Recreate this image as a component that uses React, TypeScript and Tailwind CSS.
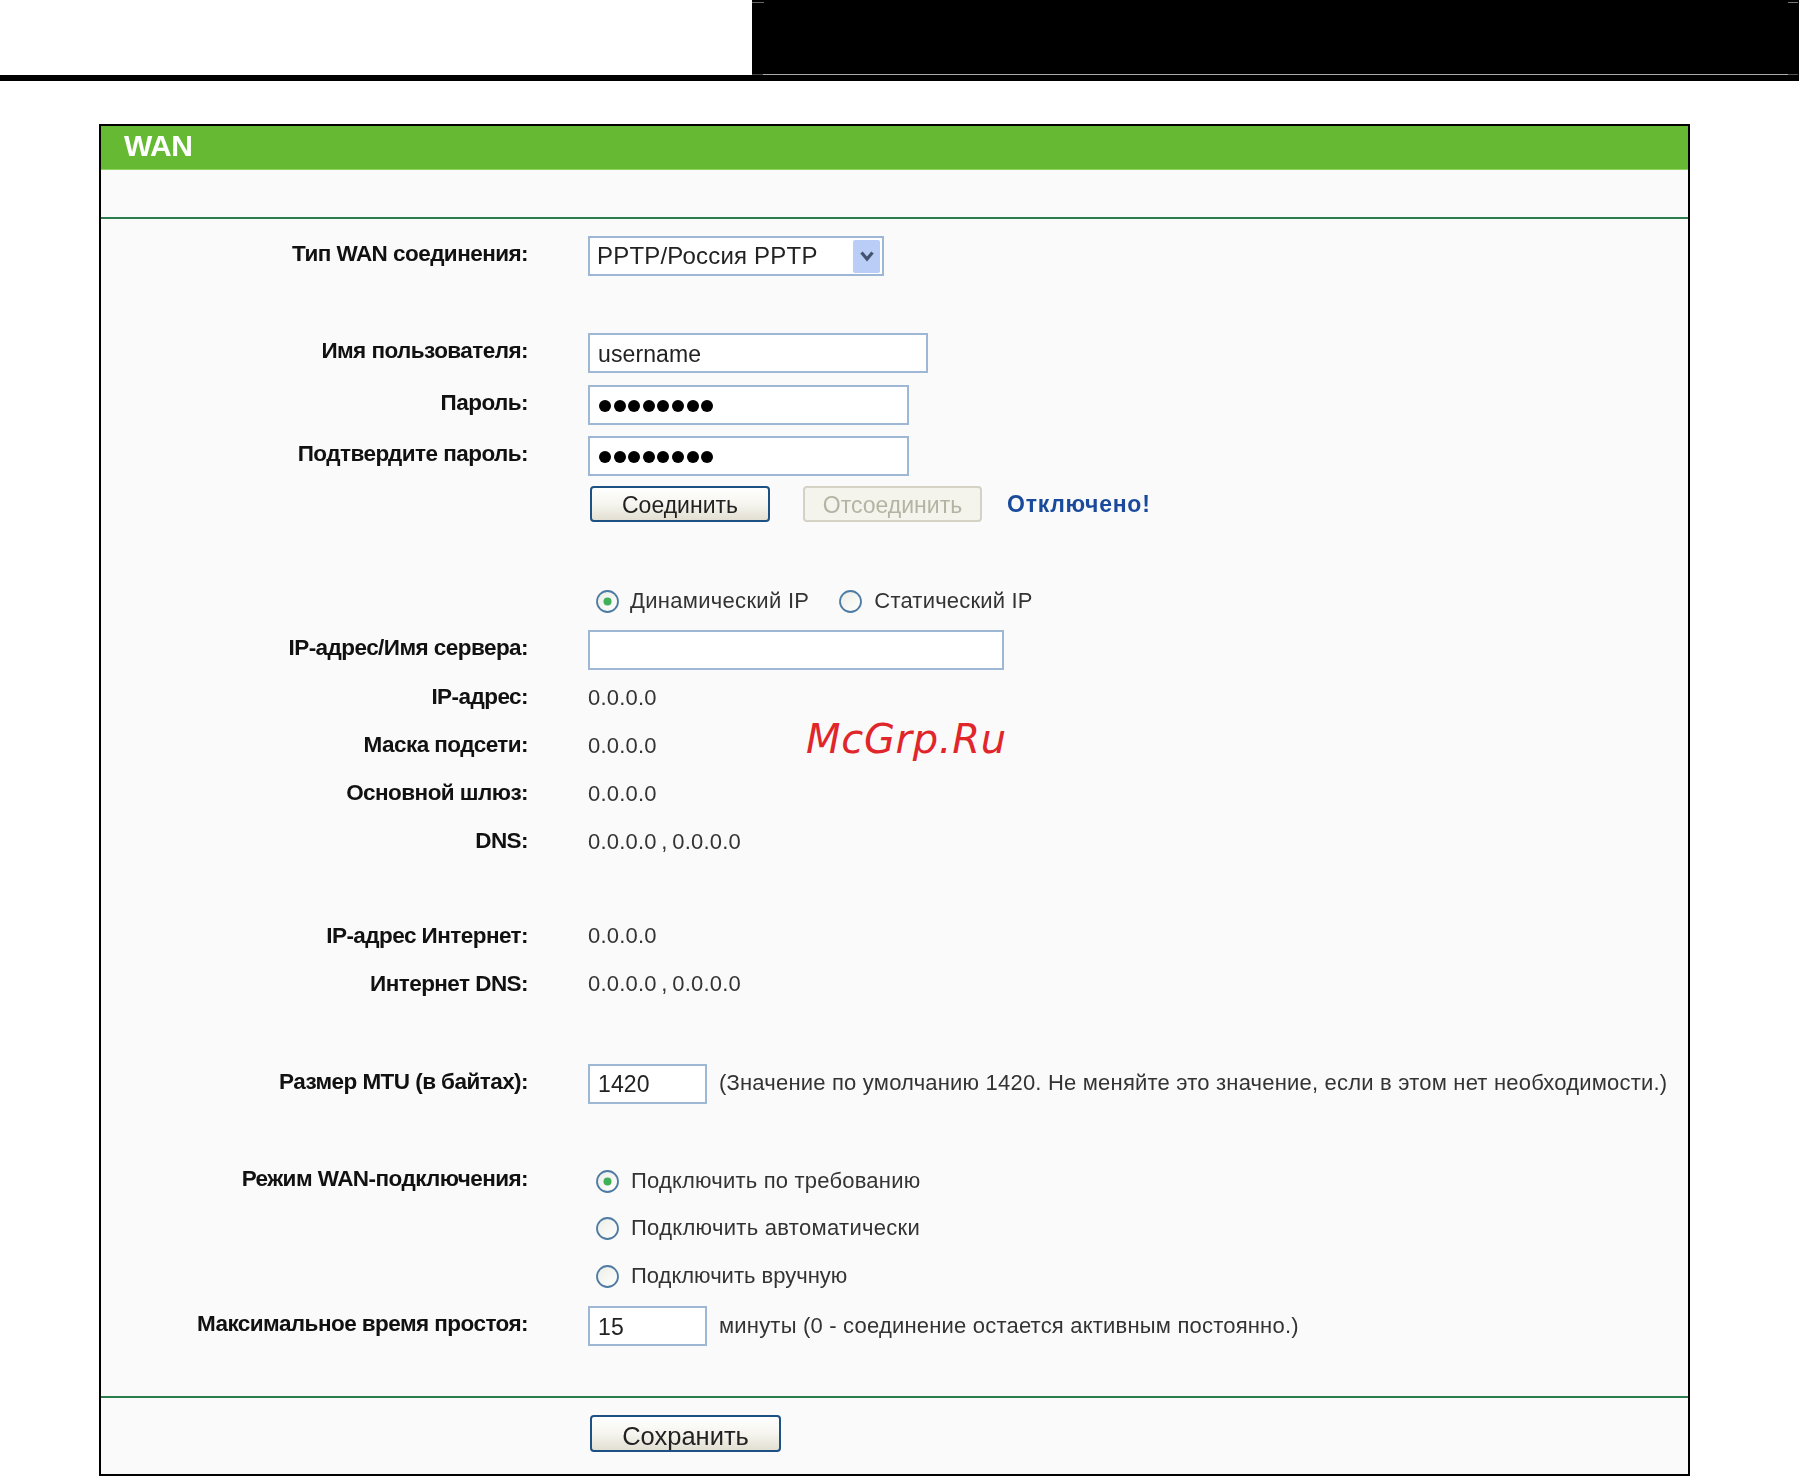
import type { ReactNode } from 'react';

const sans = 'font-["Liberation_Sans",Arial,sans-serif]';
const fieldBorder = 'border-2 border-[#9db7d4] bg-white';

function Row({ label, height, className = '', labelClass = 'pb-[4px]', children }: { label?: string; height: number; className?: string; labelClass?: string; children?: ReactNode }) {
  return (
    <div className={`flex items-center blur-[0.35px] ${className}`} style={{ height }}>
      <div className={`w-[427px] shrink-0 text-right text-[22.5px] font-bold tracking-[-0.55px] text-[#111] ${labelClass}`}>{label}</div>
      <div className="ml-[60px] flex items-center text-[22px] tracking-[0.2px] text-[#333]">{children}</div>
    </div>
  );
}

function Val({ children, className = '' }: { children: ReactNode; className?: string }) {
  return <span className={`whitespace-nowrap pb-[2px] ${className}`}>{children}</span>;
}

function Field({ value, width }: { value: string; width: number }) {
  return (
    <input
      readOnly
      type="text"
      value={value}
      style={{ width }}
      className={`h-[40px] ${fieldBorder} pl-[8px] pt-[2px] text-[23px] tracking-[0.1px] text-[#222] outline-none`}
    />
  );
}

function PasswordDots({ width }: { width: number }) {
  return (
    <div style={{ width }} className={`flex h-[40px] items-center gap-[2.6px] ${fieldBorder} pl-[9px] pt-[2px]`}>
      {[0, 1, 2, 3, 4, 5, 6, 7].map((i) => (
        <span key={i} className="h-[12px] w-[12px] rounded-full bg-black" />
      ))}
    </div>
  );
}

function Radio({ on = false }: { on?: boolean }) {
  return (
    <svg width="25" height="25" viewBox="0 0 25 25" className="shrink-0">
      <defs>
        <linearGradient id={on ? 'radio-on' : 'radio-off'} x1="0" y1="0" x2="1" y2="1">
          <stop offset="0" stopColor="#ecece6" />
          <stop offset="1" stopColor="#ffffff" />
        </linearGradient>
      </defs>
      <circle cx="12.5" cy="12.5" r="10.5" fill={`url(#${on ? 'radio-on' : 'radio-off'})`} stroke="#4d7ba3" strokeWidth="1.8" />
      {on && <circle cx="12.5" cy="12.5" r="4" fill="#3fb05a" />}
    </svg>
  );
}

function Btn({ children, width, height = 36, disabled = false }: { children: ReactNode; width: number; height?: number; disabled?: boolean }) {
  return (
    <button
      disabled={disabled}
      style={{ width, height }}
      className={
        disabled
          ? 'rounded-[4px] border-2 border-[#d3d2c4] bg-[#f4f4ec] text-[23px] text-[#b5b4a4]'
          : 'rounded-[4px] border-2 border-[#1d5083] bg-gradient-to-b from-white via-[#f6f5ef] to-[#e2dfd2] text-[23px] text-[#222]'
      }
    >
      {children}
    </button>
  );
}

export default function App() {
  return (
    <div className={`relative h-[1476px] w-full overflow-hidden bg-white ${sans}`}>
      {/* top strip */}
      <div className="flex h-[75px]">
        <div className="w-[752px]" />
        <div className="flex flex-1 flex-col justify-between bg-black pt-[2px]">
          <div className="flex justify-between">
            <span className="h-[1px] w-[12px] bg-[#666]" />
            <span className="mr-[1px] h-[1px] w-[10px] bg-[#777]" />
          </div>
          <div className="flex pb-[0.5px]">
            <span className="h-[1px] w-[11px] bg-[#444]" />
            <span className="h-[1px] flex-1 bg-[#aaa]" />
            <span className="mr-[1px] h-[1px] w-[10px] bg-[#555]" />
          </div>
        </div>
      </div>
      <div className="h-[6px] bg-black" />

      {/* panel */}
      <div className="ml-[99px] mt-[43px] h-[1352px] w-[1591px] border-2 border-black bg-[#fafafa]">
        <div className="flex h-[44px] items-center border-b border-[#8fd45f] bg-[#66b933] pb-[4px] pl-[23px] text-[30px] font-bold tracking-[-0.6px] text-white">
          <span className="blur-[0.35px]">WAN</span>
        </div>
        <div className="mt-[47px] h-[2px] bg-[#2c7d4d]" />

        <Row label="Тип WAN соединения:" height={40} className="mt-[17px]">
          <div className={`flex h-[40px] w-[296px] items-center justify-between ${fieldBorder} pl-[7px] pr-[2px] text-[24px] text-[#222]`}>
            <span>PPTP/Россия PPTP</span>
            <span className="flex h-[33px] w-[27px] items-center justify-center rounded-[2px] bg-[#b9cdf6]">
              <svg width="16" height="14" viewBox="0 0 16 14">
                <path d="M2.5 3.5 L8 10 L13.5 3.5" fill="none" stroke="#45536e" strokeWidth="3.2" />
              </svg>
            </span>
          </div>
        </Row>

        <Row label="Имя пользователя:" height={40} className="mt-[57px]">
          <Field value="username" width={340} />
        </Row>
        <Row label="Пароль:" height={40} className="mt-[12px]">
          <PasswordDots width={321} />
        </Row>
        <Row label="Подтвердите пароль:" height={40} className="mt-[11px]">
          <PasswordDots width={321} />
        </Row>
        <Row height={36} className="mt-[10px]">
          <div className="ml-[2px] flex items-center tracking-normal">
            <Btn width={180}>Соединить</Btn>
            <span className="ml-[33px]"><Btn width={179} disabled>Отсоединить</Btn></span>
            <span className="ml-[25px] text-[23px] font-bold tracking-[0.75px] text-[#1a4a9c]">Отключено!</span>
          </div>
        </Row>

        <Row height={40} className="mt-[59px]">
          <div className="ml-[7px] flex items-center">
            <Radio on />
            <Val className="ml-[10px] tracking-[0.3px]">Динамический IP</Val>
            <span className="ml-[29px]"><Radio /></span>
            <Val className="ml-[11px]">Статический IP</Val>
          </div>
        </Row>
        <Row label="IP-адрес/Имя сервера:" height={40} className="mt-[9px]">
          <Field value="" width={416} />
        </Row>
        <Row label="IP-адрес:" height={48} labelClass="pb-[2px]" className="mt-[4px]"><Val>0.0.0.0</Val></Row>
        <Row label="Маска подсети:" height={48} labelClass="pb-[2px]"><Val>0.0.0.0</Val></Row>
        <Row label="Основной шлюз:" height={48} labelClass="pb-[2px]"><Val>0.0.0.0</Val></Row>
        <Row label="DNS:" height={48} labelClass="pb-[2px]"><Val className="[word-spacing:-1.7px]">0.0.0.0 , 0.0.0.0</Val></Row>

        <Row label="IP-адрес Интернет:" height={48} labelClass="pb-0" className="mt-[46px]"><Val>0.0.0.0</Val></Row>
        <Row label="Интернет DNS:" height={48} labelClass="pb-0"><Val className="[word-spacing:-1.7px]">0.0.0.0 , 0.0.0.0</Val></Row>

        <Row label="Размер MTU (в байтах):" height={41} className="mt-[55px]">
          <Field value="1420" width={119} />
          <Val className="ml-[12px]">(Значение по умолчанию 1420. Не меняйте это значение, если в этом нет необходимости.)</Val>
        </Row>

        <Row label="Режим WAN-подключения:" height={48} className="mt-[53px]">
          <div className="ml-[7px] flex items-center"><Radio on /><Val className="ml-[11px]">Подключить по требованию</Val></div>
        </Row>
        <Row height={47}>
          <div className="ml-[7px] flex items-center"><Radio /><Val className="ml-[11px] tracking-[0.3px]">Подключить автоматически</Val></div>
        </Row>
        <Row height={48}>
          <div className="ml-[7px] flex items-center"><Radio /><Val className="ml-[11px] tracking-[0px]">Подключить вручную</Val></div>
        </Row>
        <Row label="Максимальное время простоя:" height={40} className="mt-[6px]">
          <Field value="15" width={119} />
          <Val className="ml-[12px]">минуты (0 - соединение остается активным постоянно.)</Val>
        </Row>

        <div className="mt-[50px] h-[2px] bg-[#2c7d4d]" />
        <Row height={37} className="mt-[18px]">
          <div className="ml-[2px] tracking-normal"><Btn width={191} height={37}><span className="block pb-[3px] text-[25.5px]">Сохранить</span></Btn></div>
        </Row>
      </div>

      {/* watermark */}
      <span className='absolute left-[806px] top-[715px] font-["DejaVu_Sans",sans-serif] text-[40px] italic leading-[48px] tracking-[0.7px] text-[#e0262a]'>McGrp.Ru</span>
    </div>
  );
}
